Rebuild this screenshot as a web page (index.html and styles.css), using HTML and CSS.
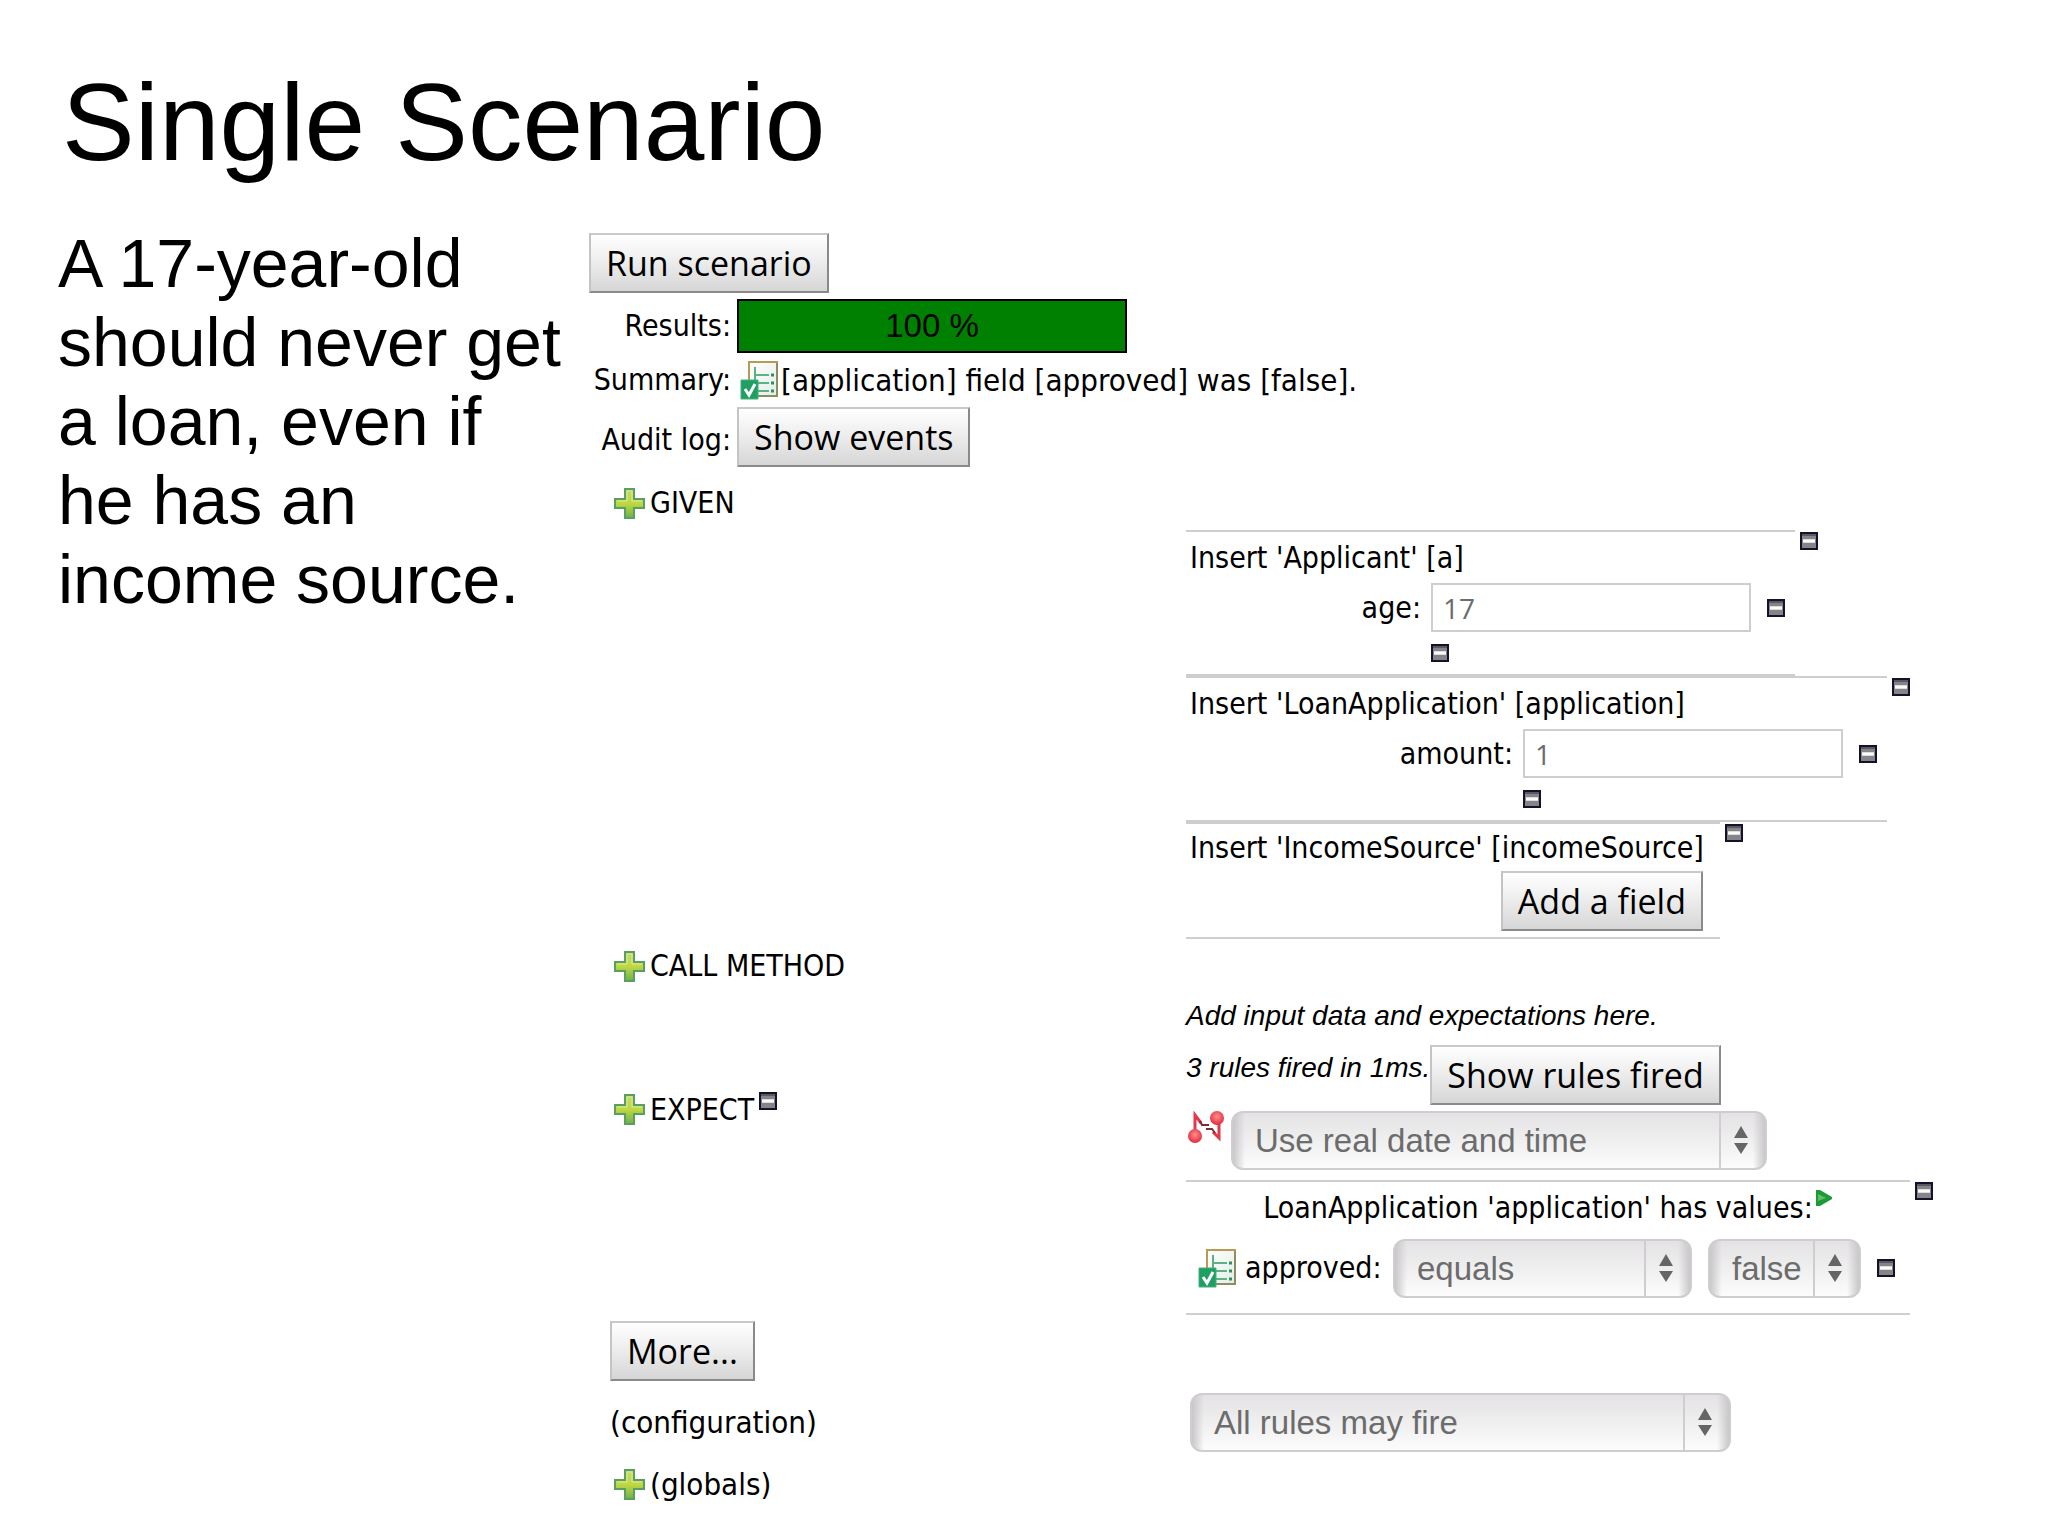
FILE: index.html
```html
<!doctype html>
<html lang="en">
<head>
<meta charset="UTF-8">
<meta name="viewport" content="width=device-width,initial-scale=1">
<title>Single Scenario</title>
<link rel="stylesheet" href="styles.css">
</head>
<body>

<!-- icons -->
<svg class="sprite" aria-hidden="true">
	<defs>
		<linearGradient id="plusFill" x1="0" y1="0" x2="0" y2="1">
			<stop offset="0" stop-color="#c3d96a"/>
			<stop offset=".5" stop-color="#bfd840"/>
			<stop offset="1" stop-color="#6fb04c"/>
		</linearGradient>
		<linearGradient id="pageFill" x1="0" y1="0" x2="1" y2="1">
			<stop offset="0" stop-color="#ffffff"/>
			<stop offset="1" stop-color="#e2eee6"/>
		</linearGradient>
		<radialGradient id="ballFill" cx=".5" cy=".4" r=".6">
			<stop offset="0" stop-color="#ff8d8d"/>
			<stop offset="1" stop-color="#e22a3c"/>
		</radialGradient>
	</defs>
	<symbol id="plus" viewBox="0 0 31 31">
		<path d="M11 1h9v10h10v9H20v10h-9V20H1v-9h10z" fill="url(#plusFill)" stroke="#5a9f62" stroke-width="2"/>
		<path d="M13 3h5v10h10M3 13h10V3" fill="none" stroke="#dcea9a" stroke-width="1"/>
	</symbol>
	<symbol id="minus" viewBox="0 0 18 18">
		<path d="M1 1h16v16H1z" fill="#858587" stroke="#12122c" stroke-width="2"/>
		<path d="M2 2h14v2H2z" fill="#5a5a5e"/>
		<path d="M3 7h12v4H3z" fill="#dcdcdc"/>
		<path d="M3 8h12v2H3z" fill="#fafafa"/>
	</symbol>
	<symbol id="check" viewBox="0 0 39 39">
		<path d="M9 1h28v34H9z" fill="url(#pageFill)" stroke="#b89a52" stroke-width="2"/>
		<path d="M37 2v33H18" fill="none" stroke="#8f8c62" stroke-width="2"/>
		<path d="M15 6v14M14 14h15M17 22h12M18 30h11" fill="none" stroke="#5fb085" stroke-width="2"/>
		<path d="M31 14h3M31 22h3M31 30h3" stroke="#2f8f60" stroke-width="3"/>
		<path d="M1 19h17v19H1z" fill="#1f9f62" stroke="#43b07c" stroke-width="1"/>
		<path d="M5 28l4 6 6-11" fill="none" stroke="#fff" stroke-width="3"/>
	</symbol>
	<symbol id="path" viewBox="0 0 36 32">
		<path d="M7 22V4l6 8M31 10v17l-6-6" fill="none" stroke="#e0394a" stroke-width="3"/>
		<path d="M12 10l2 4h7M18 18h6l3 4" fill="none" stroke="#7b2c34" stroke-width="2"/>
		<circle cx="7" cy="25" r="7" fill="url(#ballFill)"/>
		<circle cx="29" cy="7" r="7" fill="url(#ballFill)"/>
	</symbol>
	<symbol id="play" viewBox="0 0 18 16">
		<path d="M1 0h4l12 7v2L5 16H1z" fill="#1d9a36"/>
		<path d="M3 4l8 4-8 3z" fill="#5cc06a"/>
	</symbol>
	<symbol id="arrows" viewBox="0 0 16 30">
		<path d="M8 1l7 12H1zM8 29l7-11H1z" fill="#666"/>
	</symbol>
</svg>

<header class="header">
	<h1>Single Scenario</h1>
</header>

<main class="main">
	<p class="story">A 17-year-old should never get a loan, even if he has an income source.</p>

	<form class="scenario">
		<button type="button" class="btn">Run scenario</button>

		<div class="results">
			<span class="label">Results:</span>
			<div class="bar">100 %</div>
			<span class="label">Summary:</span>
			<div class="summary"><svg class="ico_check"><use href="#check"/></svg><span>[application] field [approved] was [false].</span></div>
			<span class="label">Audit log:</span>
			<div><button type="button" class="btn">Show events</button></div>
		</div>

		<div class="steps">
			<div class="step"><button type="button" class="ico_btn plus" aria-label="Add input"><svg><use href="#plus"/></svg></button>GIVEN</div>

			<div class="facts">
				<div class="fact">
					<div class="box applicant">
						<div class="title">Insert 'Applicant' [a]</div>
						<div class="field">
							<label for="age">age:</label>
							<input type="text" id="age" value="17">
							<button type="button" class="ico_btn minus" aria-label="Remove age"><svg><use href="#minus"/></svg></button>
						</div>
						<div class="foot"><button type="button" class="ico_btn minus" aria-label="Remove column"><svg><use href="#minus"/></svg></button></div>
					</div>
					<button type="button" class="ico_btn minus" aria-label="Remove Applicant"><svg><use href="#minus"/></svg></button>
				</div>

				<div class="fact">
					<div class="box loan">
						<div class="title">Insert 'LoanApplication' [application]</div>
						<div class="field">
							<label for="amount">amount:</label>
							<input type="text" id="amount" value="1">
							<button type="button" class="ico_btn minus" aria-label="Remove amount"><svg><use href="#minus"/></svg></button>
						</div>
						<div class="foot"><button type="button" class="ico_btn minus" aria-label="Remove column"><svg><use href="#minus"/></svg></button></div>
					</div>
					<button type="button" class="ico_btn minus" aria-label="Remove LoanApplication"><svg><use href="#minus"/></svg></button>
				</div>

				<div class="fact">
					<div class="box income">
						<div class="title">Insert 'IncomeSource' [incomeSource]</div>
						<button type="button" class="btn">Add a field</button>
					</div>
					<button type="button" class="ico_btn minus" aria-label="Remove IncomeSource"><svg><use href="#minus"/></svg></button>
				</div>
			</div>

			<div class="step"><button type="button" class="ico_btn plus" aria-label="Add method call"><svg><use href="#plus"/></svg></button>CALL METHOD</div>

			<em class="note hint">Add input data and expectations here.</em>

			<div class="step expect"><button type="button" class="ico_btn plus" aria-label="Add expectation"><svg><use href="#plus"/></svg></button>EXPECT<button type="button" class="ico_btn minus" aria-label="Remove expectations"><svg><use href="#minus"/></svg></button></div>
			<div class="execution">
				<div class="fired"><em class="note">3 rules fired in 1ms.</em><button type="button" class="btn">Show rules fired</button></div>
				<div class="clock">
					<svg class="ico_path"><use href="#path"/></svg>
					<span class="select date">
						<select aria-label="Date and time"><option>Use real date and time</option></select>
						<svg><use href="#arrows"/></svg>
					</span>
				</div>
			</div>

			<div class="facts">
				<div class="fact">
					<div class="box values">
						<div class="title">LoanApplication 'application' has values:<svg class="ico_play"><use href="#play"/></svg></div>
						<div class="check">
							<svg class="ico_check"><use href="#check"/></svg>
							<label for="approved">approved:</label>
							<span class="select operator">
								<select id="approved"><option>equals</option></select>
								<svg><use href="#arrows"/></svg>
							</span>
							<span class="select value">
								<select aria-label="Value"><option>false</option></select>
								<svg><use href="#arrows"/></svg>
							</span>
							<button type="button" class="ico_btn minus" aria-label="Remove approved"><svg><use href="#minus"/></svg></button>
						</div>
					</div>
					<button type="button" class="ico_btn minus" aria-label="Remove values"><svg><use href="#minus"/></svg></button>
				</div>
			</div>

			<div class="more"><button type="button" class="btn">More...</button></div>

			<label class="config" for="rules">(configuration)</label>
			<div class="rules">
				<span class="select fire">
					<select id="rules"><option>All rules may fire</option></select>
					<svg><use href="#arrows"/></svg>
				</span>
			</div>

			<div class="step globals"><button type="button" class="ico_btn plus" aria-label="Add global"><svg><use href="#plus"/></svg></button>(globals)</div>
		</div>
	</form>
</main>
</body>
</html>
```
FILE: styles.css
```css
* {
	box-sizing: border-box;
}
body {
	margin: 0;
	background: #fff;
	color: #000;
	font-family: "Liberation Sans", Arial, sans-serif;
}
.sprite {
	position: absolute;
	width: 0;
	height: 0;
}
.header {
	padding: 60px 62px 0;
}
.header h1 {
	margin: 0;
	font-size: 109px;
	font-weight: normal;
	line-height: 124px;
}
.main {
	display: grid;
	grid-template-columns: 512px 1fr;
	column-gap: 19px;
	padding: 40px 0 0 58px;
}
.story {
	margin: 0;
	font-size: 68px;
	line-height: 79px;
}
.scenario {
	padding-top: 9px;
	font-family: "DejaVu Sans Condensed", "DejaVu Sans", sans-serif;
	font-size: 30px;
	line-height: 42px;
}

/* controls */
.btn {
	display: block;
	height: 60px;
	padding: 0 15px;
	border: 2px solid;
	border-color: #c9c9c9 #8a8a8a #8a8a8a #c4c4c4;
	background: linear-gradient(#fff, #f0f0f0 40%, #d6d6d6);
	color: #000;
	font-family: "Open Sans", sans-serif;
	font-size: 34px;
	line-height: 56px;
	white-space: nowrap;
}
.ico_btn {
	flex: none;
	padding: 0;
	border: 0;
	background: none;
}
.ico_btn svg {
	display: block;
	width: 100%;
	height: 100%;
}
.plus {
	width: 31px;
	height: 31px;
}
.minus {
	width: 18px;
	height: 18px;
}
.ico_check {
	flex: none;
	width: 39px;
	height: 39px;
}
.select {
	position: relative;
	flex: none;
	height: 59px;
}
.select select {
	width: 100%;
	height: 100%;
	padding: 0 46px 0 22px;
	border: 2px solid #cfcdcf;
	border-radius: 12px;
	appearance: none;
	background:
		linear-gradient(90deg, #c9c7c9, rgba(240, 240, 240, 0)) left / 12px 100% no-repeat,
		linear-gradient(270deg, #c9c7c9, rgba(240, 240, 240, 0)) right / 12px 100% no-repeat,
		linear-gradient(#cfcdcf, #cfcdcf) right 44px top / 2px 100% no-repeat,
		linear-gradient(#e4e2e4, #fcfcfc);
	color: #6c6c6c;
	font-family: "Liberation Sans", Arial, sans-serif;
	font-size: 33px;
}
.select svg {
	position: absolute;
	top: 14px;
	right: 18px;
	width: 16px;
	height: 30px;
	pointer-events: none;
}

/* run results */
.results {
	display: grid;
	grid-template-columns: 142px 1fr;
	grid-template-rows: 54px 54px 60px;
	column-gap: 6px;
	align-items: center;
	margin-top: 6px;
}
.results .label {
	text-align: right;
}
.results .label:nth-last-child(2),
.results > div:last-child {
	align-self: baseline;
}
.bar {
	width: 390px;
	height: 54px;
	border: 2px solid #000;
	background: #008000;
	font-family: "Liberation Sans", Arial, sans-serif;
	font-size: 33px;
	line-height: 50px;
	text-align: center;
}
.summary {
	display: flex;
	align-items: center;
	gap: 2px;
	padding-left: 3px;
	font-size: 31px;
	white-space: nowrap;
}

/* given / call / expect */
.steps {
	display: grid;
	grid-template-columns: 576px 1fr;
	row-gap: 6px;
	margin: 15px 0 0 21px;
}
.step {
	display: flex;
	grid-column: 1 / 3;
	align-items: center;
	gap: 5px;
	padding-left: 4px;
}
.expect {
	grid-column: 1;
	align-self: center;
}
.expect .minus {
	align-self: flex-start;
	margin-top: 3px;
}
.facts,
.hint {
	grid-column: 2;
}
.fact {
	display: flex;
	gap: 5px;
}
.fact > .minus {
	margin-top: 2px;
}
.box {
	border-top: 2px solid #cfcdcf;
	border-bottom: 2px solid #cfcdcf;
}
.title {
	padding-left: 4px;
	line-height: 51px;
	white-space: nowrap;
}
.field {
	display: flex;
	align-items: center;
	padding-right: 10px;
}
.field label {
	padding-right: 10px;
	text-align: right;
}
.field input {
	width: 320px;
	height: 49px;
	margin-right: 16px;
	padding: 0 10px;
	border: 2px solid #cfcdcf;
	background: #fff;
	color: #6c6c6c;
	font-family: "Open Sans", sans-serif;
	font-size: 28px;
}
.foot {
	display: flex;
	align-items: center;
	height: 42px;
}
.applicant label {
	width: 245px;
}
.applicant .foot {
	padding-left: 245px;
}
.loan label {
	width: 337px;
}
.loan .foot {
	padding-left: 337px;
}
.income {
	width: 534px;
	padding-bottom: 6px;
}
.income .title {
	line-height: 47px;
}
.income .btn {
	margin: 0 17px 0 auto;
}
.note {
	font-family: "Liberation Sans", Arial, sans-serif;
	font-size: 28px;
	line-height: 46px;
	white-space: nowrap;
}
.fired {
	display: flex;
}
.clock {
	display: flex;
	gap: 7px;
	margin: 6px 0 4px;
	padding-left: 2px;
}
.ico_path {
	width: 36px;
	height: 32px;
}
.date {
	width: 536px;
}
.values {
	width: 724px;
}
.values .title {
	display: flex;
	justify-content: center;
	padding: 0;
}
.ico_play {
	width: 18px;
	height: 16px;
	margin: 8px 0 0 2px;
}
.check {
	display: flex;
	align-items: center;
	height: 80px;
	padding: 0 0 10px 12px;
}
.check label {
	width: 156px;
	padding-left: 8px;
}
.operator {
	width: 299px;
	margin-right: 16px;
}
.value {
	width: 153px;
	margin-right: 16px;
}
.more {
	grid-column: 1 / 3;
}
.config {
	align-self: center;
}
.config,
.globals {
	font-size: 31px;
}
.rules {
	display: flex;
	align-items: center;
	height: 70px;
	padding-left: 4px;
}
.fire {
	width: 541px;
}
```
